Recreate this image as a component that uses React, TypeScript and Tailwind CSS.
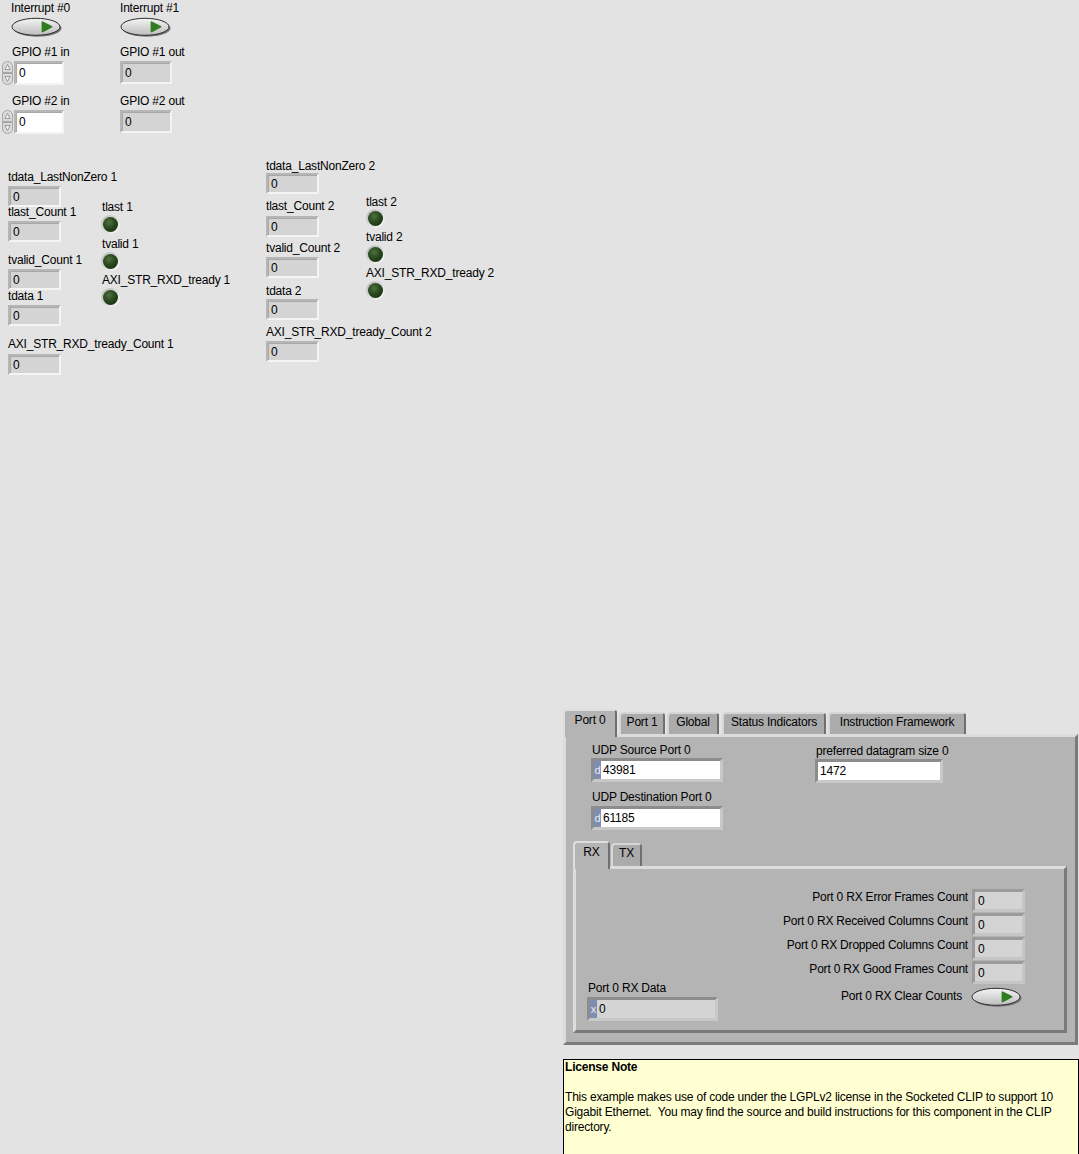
import React from "react";

type Box = { children?: React.ReactNode; className?: string };

function Label({ children, className = "" }: Box) {
  return <div className={`h-[14px] leading-[14px] whitespace-nowrap ${className}`}>{children}</div>;
}

// grey read-only numeric on the light page background
function Indicator({ className = "", value = "0" }: { className?: string; value?: string }) {
  return (
    <div
      className={`flex items-center pl-[3px] border-2 border-t-[#b6b6b6] border-l-[#b6b6b6] border-r-[#f4f4f4] border-b-[#f4f4f4] bg-[#d4d4d4] shadow-[inset_1px_1px_0_#a8a8a8] ${className}`}
    >
      {value}
    </div>
  );
}

// white numeric control on the page
function Control({ className = "", value = "0" }: { className?: string; value?: string }) {
  return (
    <div
      className={`flex items-center pl-[3px] border-2 border-t-[#b6b6b6] border-l-[#b6b6b6] border-r-[#f4f4f4] border-b-[#f4f4f4] bg-white shadow-[inset_1px_1px_0_#a8a8a8] ${className}`}
    >
      {value}
    </div>
  );
}

// numeric inside the tab panel, optional radix marker
function PanelField({
  radix,
  value,
  className = "",
  bg = "bg-white",
}: {
  radix?: string;
  value: string;
  className?: string;
  bg?: string;
}) {
  return (
    <div
      className={`flex border-[3px] border-t-[#8c8c8c] border-l-[#8c8c8c] border-r-[#c8c8c8] border-b-[#c8c8c8] ${className}`}
    >
      <div className={`flex flex-1 items-center ${bg}`}>
        {radix && (
          <div className="w-[7px] h-full flex items-center justify-center bg-[#7d8eb2] text-[#e4e9f6] text-[11px]">
            {radix}
          </div>
        )}
        <span className="pl-[2px]">{value}</span>
      </div>
    </div>
  );
}

function Led() {
  return (
    <div className="w-[19px] h-[19px] rounded-full p-[2px] bg-[linear-gradient(135deg,#b4b4b4,#ffffff)]">
      <div className="w-full h-full rounded-full bg-[radial-gradient(circle_at_40%_35%,#4f7040_0%,#25451a_50%,#112909_100%)]" />
    </div>
  );
}

function OkButton({ id }: { id: string }) {
  return (
    <svg width="52" height="21" viewBox="0 0 52 21" className="block">
      <defs>
        <linearGradient id={id} x1="0" y1="0" x2="0" y2="1">
          <stop offset="0" stopColor="#f4f4f4" />
          <stop offset="1" stopColor="#bdbdbd" />
        </linearGradient>
      </defs>
      <ellipse cx="26.5" cy="11.2" rx="24" ry="8.5" fill="#777" />
      <ellipse cx="25" cy="9.8" rx="24" ry="8.5" fill={`url(#${id})`} stroke="#2c2c2c" strokeWidth="1" />
      <path d="M31.5 5.2 L40.5 9.8 L31.5 14.4 Z" fill="#2f7d20" stroke="#2f7d20" strokeWidth="1.8" strokeLinejoin="round" />
    </svg>
  );
}

function Spinner() {
  return (
    <svg width="11" height="24" viewBox="0 0 11 24" className="block">
      <path d="M0.5 11.5 V5 A5 4.5 0 0 1 10.5 5 V11.5 Z" fill="#dadada" stroke="#a6a6a6" />
      <path d="M0.5 12.5 V19 A5 4.5 0 0 0 10.5 19 V12.5 Z" fill="#dadada" stroke="#a6a6a6" />
      <path d="M5.5 3.5 L8 8.5 H3 Z" fill="#f4f4f4" stroke="#888" strokeWidth="0.8" />
      <path d="M5.5 20.5 L8 15.5 H3 Z" fill="#f4f4f4" stroke="#888" strokeWidth="0.8" />
    </svg>
  );
}

function Tab({ children, selected, className = "" }: Box & { selected?: boolean }) {
  return selected ? (
    <div
      className={`relative z-10 h-[28px] mb-[-3px] rounded-t-[4px] border-t-2 border-l-2 border-r-2 border-t-[#dedede] border-l-[#dedede] border-r-[#6f6f6f] bg-[#b4b4b4] text-center pt-[2px] ${className}`}
    >
      {children}
    </div>
  ) : (
    <div
      className={`h-[22px] rounded-t-[4px] border-t-2 border-l-2 border-r-2 border-t-[#d6d6d6] border-l-[#d6d6d6] border-r-[#6f6f6f] bg-[#ababab] text-center pt-[1px] ${className}`}
    >
      {children}
    </div>
  );
}

function CountRow({ label }: { label: string }) {
  return (
    <div className="flex items-start mt-[1px]">
      <Label className="mt-[1px]">{label}</Label>
      <div className="ml-[4px] w-[53px] h-[23px] flex items-center pl-[3px] border-[3px] border-t-[#9a9a9a] border-l-[#9a9a9a] border-r-[#c6c6c6] border-b-[#c6c6c6] bg-[#d4d4d4]">
        0
      </div>
    </div>
  );
}

export default function App() {
  return (
    <div className="w-[1079px] h-[1154px] overflow-hidden bg-[#e3e3e3] text-black text-[12px] leading-[14px] tracking-[-0.2px] font-['Liberation_Sans',Arial,sans-serif] flex flex-col">
      {/* interrupts */}
      <div className="flex pt-[1px]">
        <div className="w-[120px] pl-[11px]">
          <Label>Interrupt #0</Label>
          <div className="mt-[2px]">
            <OkButton id="okg0" />
          </div>
        </div>
        <div>
          <Label>Interrupt #1</Label>
          <div className="mt-[2px]">
            <OkButton id="okg1" />
          </div>
        </div>
      </div>

      {/* gpio */}
      <div className="flex mt-[7px]">
        <div className="w-[120px]">
          <Label className="pl-[12px]">GPIO #1 in</Label>
          <div className="flex mt-[2px] pl-[2px]">
            <Spinner />
            <Control className="ml-[1px] w-[50px] h-[24px]" />
          </div>
        </div>
        <div>
          <Label>GPIO #1 out</Label>
          <Indicator className="mt-[2px] w-[52px] h-[23px]" />
        </div>
      </div>
      <div className="flex mt-[9px]">
        <div className="w-[120px]">
          <Label className="pl-[12px]">GPIO #2 in</Label>
          <div className="flex mt-[2px] pl-[2px]">
            <Spinner />
            <Control className="ml-[1px] w-[50px] h-[24px]" />
          </div>
        </div>
        <div>
          <Label>GPIO #2 out</Label>
          <Indicator className="mt-[2px] w-[52px] h-[23px]" />
        </div>
      </div>

      {/* AXI stream clusters */}
      <div className="flex mt-[25px]">
        <div className="flex w-[266px] pl-[8px] mt-[11px]">
          <div className="w-[94px]">
            <Label>tdata_LastNonZero 1</Label>
            <Indicator className="mt-[2px] w-[53px] h-[21px]" />
            <Label className="mt-[-2px]">tlast_Count 1</Label>
            <Indicator className="mt-[2px] w-[53px] h-[21px]" />
            <Label className="mt-[11px]">tvalid_Count 1</Label>
            <Indicator className="mt-[2px] w-[53px] h-[21px]" />
            <Label className="mt-[-1px]">tdata 1</Label>
            <Indicator className="mt-[2px] w-[53px] h-[21px]" />
            <Label className="mt-[11px]">AXI_STR_RXD_tready_Count 1</Label>
            <Indicator className="mt-[3px] w-[53px] h-[21px]" />
          </div>
          <div className="mt-[30px]">
            <Label>tlast 1</Label>
            <div className="mt-[1px] ml-[-1px]">
              <Led />
            </div>
            <Label className="mt-[3px]">tvalid 1</Label>
            <div className="mt-[1px] ml-[-1px]">
              <Led />
            </div>
            <Label className="mt-[2px]">AXI_STR_RXD_tready 1</Label>
            <div className="mt-[1px] ml-[-1px]">
              <Led />
            </div>
          </div>
        </div>
        <div className="flex">
          <div className="w-[100px]">
            <Label>tdata_LastNonZero 2</Label>
            <Indicator className="w-[53px] h-[21px]" />
            <Label className="mt-[5px]">tlast_Count 2</Label>
            <Indicator className="mt-[3px] w-[53px] h-[21px]" />
            <Label className="mt-[4px]">tvalid_Count 2</Label>
            <Indicator className="mt-[2px] w-[53px] h-[21px]" />
            <Label className="mt-[6px]">tdata 2</Label>
            <Indicator className="mt-[1px] w-[53px] h-[21px]" />
            <Label className="mt-[5px]">AXI_STR_RXD_tready_Count 2</Label>
            <Indicator className="mt-[2px] w-[53px] h-[21px]" />
          </div>
          <div className="mt-[36px]">
            <Label>tlast 2</Label>
            <Led />
            <Label className="mt-[2px]">tvalid 2</Label>
            <div className="mt-[1px]">
              <Led />
            </div>
            <Label className="mt-[2px]">AXI_STR_RXD_tready 2</Label>
            <div className="mt-[1px]">
              <Led />
            </div>
          </div>
        </div>
      </div>

      {/* tab control + license note */}
      <div className="mt-auto ml-[563px]">
        <div className="w-[515px]">
          <div className="flex items-end h-[25px]">
            <Tab selected className="w-[54px]">
              Port 0
            </Tab>
            <Tab className="ml-[2px] w-[46px]">Port 1</Tab>
            <Tab className="ml-[2px] w-[52px]">Global</Tab>
            <Tab className="ml-[3px] w-[104px]">Status Indicators</Tab>
            <Tab className="ml-[2px] w-[138px]">Instruction Framework</Tab>
          </div>
          <div className="h-[311px] border-[3px] border-t-[#dcdcdc] border-l-[#dcdcdc] border-r-[#7a7a7a] border-b-[#7a7a7a] bg-[#b4b4b4]">
            <div className="flex pt-[6px] pl-[25px]">
              <div className="w-[224px]">
                <Label className="pl-[1px]">UDP Source Port 0</Label>
                <PanelField radix="d" value="43981" className="mt-[1px] w-[132px] h-[24px]" />
                <Label className="pl-[1px] mt-[8px]">UDP Destination Port 0</Label>
                <PanelField radix="d" value="61185" className="mt-[2px] w-[132px] h-[24px]" />
              </div>
              <div className="mt-[1px]">
                <Label className="pl-[1px]">preferred datagram size 0</Label>
                <PanelField value="1472" className="mt-[1px] w-[128px] h-[24px]" />
              </div>
            </div>

            <div className="ml-[7px] mt-[11px] w-[494px]">
              <div className="flex items-end h-[25px]">
                <Tab selected className="w-[37px]">
                  RX
                </Tab>
                <Tab className="ml-[1px] w-[31px] h-[23px]">TX</Tab>
              </div>
              <div className="h-[167px] flex border-[3px] border-t-[#dcdcdc] border-l-[#dcdcdc] border-r-[#7a7a7a] border-b-[#7a7a7a] bg-[#b4b4b4]">
                <div className="self-end mb-[9px] ml-[11px]">
                  <Label className="pl-[1px]">Port 0 RX Data</Label>
                  <PanelField radix="x" value="0" bg="bg-[#d4d4d4]" className="mt-[2px] w-[131px] h-[24px]" />
                </div>
                <div className="ml-auto mr-[39px] mt-[19px] flex flex-col items-end">
                  <CountRow label="Port 0 RX Error Frames Count" />
                  <CountRow label="Port 0 RX Received Columns Count" />
                  <CountRow label="Port 0 RX Dropped Columns Count" />
                  <CountRow label="Port 0 RX Good Frames Count" />
                  <div className="flex items-start mt-[3px]">
                    <Label className="mt-[2px]">Port 0 RX Clear Counts</Label>
                    <div className="ml-[9px] mr-[2px]">
                      <OkButton id="okclr" />
                    </div>
                  </div>
                </div>
              </div>
            </div>
          </div>
        </div>

        <div className="mt-[14px] w-[516px] h-[95px] border border-b-0 border-black bg-[#ffffd2] px-[1px] leading-[15px] whitespace-nowrap">
          <div className="font-bold">License Note</div>
          <div className="h-[15px]" />
          <div>
            This example makes use of code under the LGPLv2 license in the Socketed CLIP to support 10
            <br />
            Gigabit Ethernet.&nbsp; You may find the source and build instructions for this component in the CLIP
            <br />
            directory.
          </div>
        </div>
      </div>
    </div>
  );
}
